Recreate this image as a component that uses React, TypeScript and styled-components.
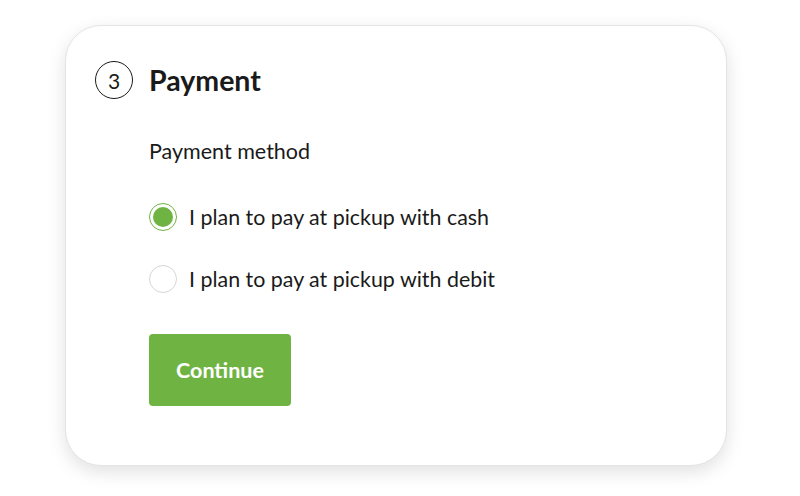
import { useState } from "react";
import styled, { createGlobalStyle } from "styled-components";

const GlobalStyle = createGlobalStyle`
  html, body {
    margin: 0;
    padding: 0;
    background: #ffffff;
    font-family: "Lato", "Noto Sans", sans-serif;
    color: #1a1a1a;
  }
`;

const Page = styled.div`
  width: 800px;
  height: 496px;
  padding: 25px 0 0 65px;
  box-sizing: border-box;
`;

const Card = styled.section`
  width: 662px;
  height: 441px;
  box-sizing: border-box;
  background: #fff;
  border: 1px solid #e4e4e4;
  border-radius: 36px;
  box-shadow: 0 6px 18px rgba(0, 0, 0, 0.12);
  padding: 35px 30px 0 29px;
`;

const Header = styled.div`
  display: flex;
  align-items: center;
  gap: 16px;
`;

const StepBadge = styled.div`
  width: 38px;
  height: 38px;
  box-sizing: border-box;
  border: 1px solid #1a1a1a;
  border-radius: 50%;
  display: flex;
  align-items: center;
  justify-content: center;
  font-size: 21px;
`;

const Title = styled.h2`
  margin: 0;
  font-size: 28.5px;
  font-weight: 700;
  line-height: 38px;
`;

const Body = styled.div`
  padding-left: 54px;
  display: flex;
  flex-direction: column;
  align-items: flex-start;
`;

const Label = styled.div`
  margin-top: 39px;
  font-size: 21.5px;
  line-height: 26px;
`;

const Options = styled.div`
  display: flex;
  flex-direction: column;
  gap: 34px;
  margin-top: 39px;
`;

const Option = styled.label`
  display: flex;
  align-items: center;
  gap: 12px;
  font-size: 21.4px;
  cursor: pointer;
  height: 28px;
`;

const Radio = styled.span<{ $checked: boolean }>`
  width: 28px;
  height: 28px;
  box-sizing: border-box;
  border-radius: 50%;
  border: 1px solid ${(p) => (p.$checked ? "#6fb443" : "#d6d6d6")};
  display: flex;
  align-items: center;
  justify-content: center;

  &::after {
    content: "";
    width: 20px;
    height: 20px;
    border-radius: 50%;
    background: ${(p) => (p.$checked ? "#6fb443" : "transparent")};
  }
`;

const Button = styled.button`
  margin-top: 41px;
  width: 142px;
  height: 72px;
  border: none;
  border-radius: 4px;
  background: #6fb443;
  color: #fff;
  font-family: inherit;
  font-size: 21.5px;
  font-weight: 700;
  cursor: pointer;
`;

const options = [
  "I plan to pay at pickup with cash",
  "I plan to pay at pickup with debit",
];

export default function App() {
  const [selected, setSelected] = useState(0);
  return (
    <>
      <GlobalStyle />
      <Page>
        <Card>
          <Header>
            <StepBadge>3</StepBadge>
            <Title>Payment</Title>
          </Header>
          <Body>
            <Label>Payment method</Label>
            <Options>
              {options.map((text, i) => (
                <Option key={text} onClick={() => setSelected(i)}>
                  <Radio $checked={selected === i} />
                  {text}
                </Option>
              ))}
            </Options>
            <Button>Continue</Button>
          </Body>
        </Card>
      </Page>
    </>
  );
}
